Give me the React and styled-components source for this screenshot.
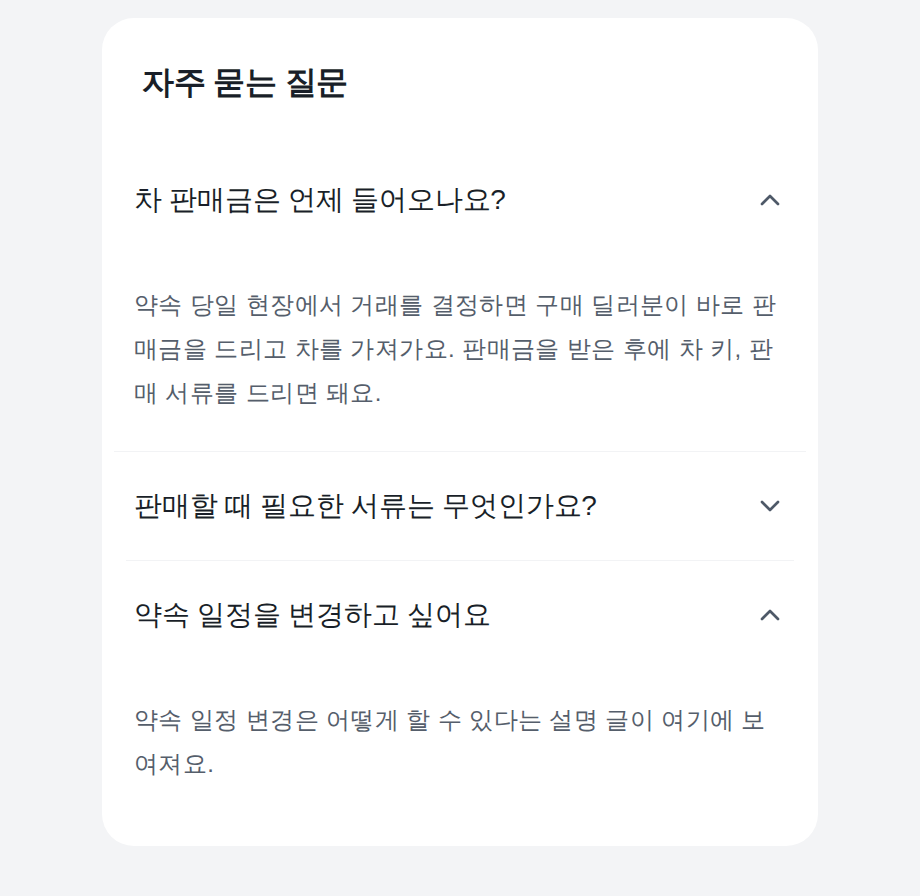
import React, { useState } from "react";
import styled, { createGlobalStyle } from "styled-components";
import { ChevronDown, ChevronUp } from "lucide-react";

const GlobalStyle = createGlobalStyle`
  body {
    margin: 0;
    background-color: #f3f4f6;
    font-family: "Liberation Sans", sans-serif;
  }
`;

const Card = styled.section`
  width: 716px;
  margin: 18px auto;
  padding: 24px 12px;
  box-sizing: border-box;
  background-color: #ffffff;
  border-radius: 32px;
`;

const Title = styled.h2`
  margin: 0;
  padding: 18px 28px 42px;
  font-size: 32px;
  line-height: 44px;
  font-weight: 700;
  letter-spacing: -0.5px;
  color: #191f28;
`;

const List = styled.div`
  display: flex;
  flex-direction: column;
`;

const Item = styled.div`
  margin: ${(p) => (p.$open ? "0" : "0 12px")};
  border-bottom: 1px solid #f2f3f5;

  &:last-child {
    border-bottom: none;
  }
`;

const Question = styled.button`
  display: flex;
  align-items: center;
  justify-content: space-between;
  width: 100%;
  padding: 34px ${(p) => (p.$open ? "20px" : "8px")};
  border: none;
  background: none;
  cursor: pointer;
  font-family: inherit;
  font-size: 28px;
  line-height: 40px;
  font-weight: 400;
  letter-spacing: -0.2px;
  color: #191f28;
  text-align: left;

  svg {
    flex-shrink: 0;
    color: #4e5968;
  }
`;

const Answer = styled.p`
  margin: 0;
  padding: 29px 20px 36px;
  font-size: 24px;
  line-height: 44px;
  letter-spacing: 0.4px;
  color: #555e6b;
`;

const faqs = [
  {
    q: "차 판매금은 언제 들어오나요?",
    a: "약속 당일 현장에서 거래를 결정하면 구매 딜러분이 바로 판매금을 드리고 차를 가져가요. 판매금을 받은 후에 차 키, 판매 서류를 드리면 돼요.",
  },
  {
    q: "판매할 때 필요한 서류는 무엇인가요?",
    a: "자동차 등록증과 신분증을 준비해 주세요.",
  },
  {
    q: "약속 일정을 변경하고 싶어요",
    a: "약속 일정 변경은 어떻게 할 수 있다는 설명 글이 여기에 보여져요.",
  },
];

const App = () => {
  const [open, setOpen] = useState([true, false, true]);

  const toggle = (i) =>
    setOpen((prev) => prev.map((v, idx) => (idx === i ? !v : v)));

  return (
    <>
      <GlobalStyle />
      <Card>
        <Title>자주 묻는 질문</Title>
        <List>
          {faqs.map((f, i) => (
            <Item key={f.q} $open={open[i]}>
              <Question $open={open[i]} onClick={() => toggle(i)}>
                <span>{f.q}</span>
                {open[i] ? <ChevronUp size={32} /> : <ChevronDown size={32} />}
              </Question>
              {open[i] && <Answer>{f.a}</Answer>}
            </Item>
          ))}
        </List>
      </Card>
    </>
  );
};

export default App;
